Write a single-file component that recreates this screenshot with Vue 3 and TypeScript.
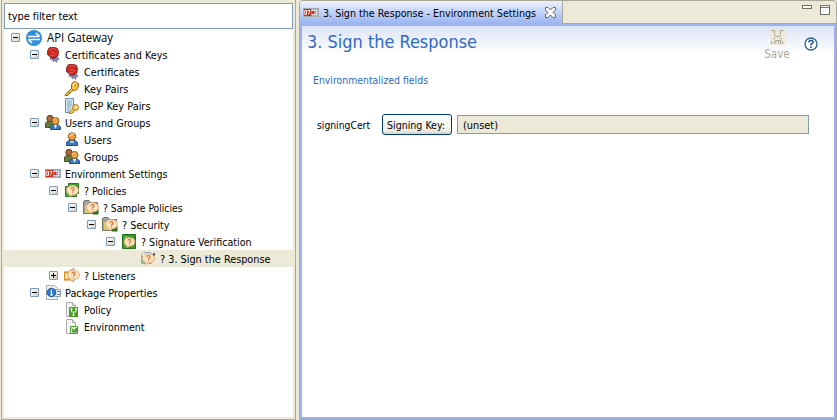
<script setup lang="ts">
interface TreeRow {
  label: string
  level: number
  icon: string
  toggle?: 'minus' | 'plus'
  selected?: boolean
  width: number
}

const rows: TreeRow[] = [
  { label: 'API Gateway', level: 0, icon: 'gateway', toggle: 'minus', width: 66 },
  { label: 'Certificates and Keys', level: 1, icon: 'seal', toggle: 'minus', width: 102.5 },
  { label: 'Certificates', level: 2, icon: 'seal', width: 55.5 },
  { label: 'Key Pairs', level: 2, icon: 'key', width: 44.5 },
  { label: 'PGP Key Pairs', level: 2, icon: 'pgp', width: 66.5 },
  { label: 'Users and Groups', level: 1, icon: 'group', toggle: 'minus', width: 85.5 },
  { label: 'Users', level: 2, icon: 'user', width: 27.5 },
  { label: 'Groups', level: 2, icon: 'group', width: 34.5 },
  { label: 'Environment Settings', level: 1, icon: 'env', toggle: 'minus', width: 102.5 },
  { label: '? Policies', level: 2, icon: 'policies', toggle: 'minus', width: 42.5 },
  { label: '? Sample Policies', level: 3, icon: 'folder', toggle: 'minus', width: 79.5 },
  { label: '? Security', level: 4, icon: 'folder', toggle: 'minus', width: 47.5 },
  { label: '? Signature Verification', level: 5, icon: 'circuit', toggle: 'minus', width: 110.5 },
  { label: '? 3. Sign the Response', level: 6, icon: 'sign', selected: true, width: 110.5 },
  { label: '? Listeners', level: 2, icon: 'listener', toggle: 'plus', width: 51.5 },
  { label: 'Package Properties', level: 1, icon: 'package', toggle: 'minus', width: 92.5 },
  { label: 'Policy', level: 2, icon: 'policyfile', width: 27.5 },
  { label: 'Environment', level: 2, icon: 'envfile', width: 60.5 },
]
</script>

<template>
  <svg class="defs" width="0" height="0">
    <defs>
      <symbol id="gateway" viewBox="0 0 16 16">
        <circle cx="8" cy="8" r="8" fill="#2d8fdd" />
        <path d="M2 6.500h11.500M10 3l3.500 3.500M14 9.500H2.500M6 13L2.500 9.500" fill="none" stroke="#fff" stroke-width="1.700" />
      </symbol>
      <symbol id="seal" viewBox="0 0 16 16">
        <path d="M6.500 9.500L5 12.500l2-.5 1.500 3 1-2 2 2.500.5-2.500 2-.5-2.500-4z" fill="#7c8abf" stroke="#56639a" stroke-width=".6" />
        <path d="M4 1l3-1 3 .5 2.500 1 1 3-.5 4-2 2-3 1-3-1.500L2.500 7.500V4z" fill="#c8251f" stroke="#8e1d1c" stroke-width=".8" />
        <path d="M4.500 3l4-1.500 3 1.500M4.500 9l4-.5 3-2" fill="none" stroke="#e96a5c" stroke-width=".9" />
        <path d="M5 5l4-1 1.500 2-4 1.500z" fill="#dc3d32" />
      </symbol>
      <symbol id="key" viewBox="0 0 16 16">
        <path d="M8.500 7L1 13.500V14.500h3v-1.500h1.500V11.500h1.500l2.500-2.500" fill="#f8ca4c" stroke="#9d6813" />
        <path d="M8.500 1.500L11 .5l3.500 2v3l-2 3.500-3 .5-2-2V4z" fill="#f7c345" stroke="#a66b14" />
        <path d="M9 4l2-2 2 .5" fill="none" stroke="#fff0a5" />
        <circle cx="12.300" cy="4" r="1.100" fill="#fff" stroke="#9b6719" stroke-width=".6" />
      </symbol>
      <symbol id="pgp" viewBox="0 0 16 16">
        <path d="M1.500.5h8v14h-8z" fill="#dbeaf5" stroke="#6c8ba7" />
        <path d="M3 3h5M3 5h5M3 7h5M3 9h4M3 11h3M3 13h2" stroke="#7ba6ca" />
        <path d="M9 10.500L5.500 14v1.500h2L10.500 12.500" fill="#f7cc52" stroke="#b4781d" />
        <circle cx="11.500" cy="9.500" r="3" fill="#f6c95d" stroke="#b4781d" />
        <circle cx="12.300" cy="8.700" r="1" fill="#fff" />
      </symbol>
      <symbol id="user" viewBox="0 0 16 16">
        <path d="M2.500 13.500V10.500L5 8.500h6l2.500 2v3z" fill="#3c7dc1" stroke="#1f4c88" />
        <path d="M6 9l2 4 2-4z" fill="#e8f4ff" />
        <path d="M7.500 10h1v3.500h-1z" fill="#193f77" />
        <circle cx="8" cy="4.500" r="3.700" fill="#ed9f3f" stroke="#945518" />
        <path d="M5.800 4l2-2 2 .5" fill="none" stroke="#ffd58b" stroke-width="1.300" />
      </symbol>
      <symbol id="group" viewBox="0 0 16 16">
        <path d="M.5 12.500V8L3 6h5v6.500z" fill="#66793f" stroke="#435429" />
        <circle cx="5" cy="3.500" r="3.200" fill="#a8693d" stroke="#704020" />
        <path d="M5.500 14.500V12L8 9.500h5l2.500 2.500v2.500z" fill="#3c7dc1" stroke="#204d87" />
        <path d="M9 10l1.500 4 1.500-4z" fill="#eef6ff" />
        <circle cx="10.500" cy="6" r="3.500" fill="#eda342" stroke="#98601e" />
        <path d="M8.500 5l2-1.500" stroke="#ffd786" />
      </symbol>
      <symbol id="env" viewBox="0 0 16 16">
        <path d="M0 3h16v9H0z" fill="#a7a9ac" />
        <path d="M1 4h7v7H1z" fill="#c4321d" />
        <path d="M8 4h7v7H8z" fill="#5c94cb" />
        <path d="M1.800 5.500h1.700v4H1.800zM4.500 5.500H7L5.500 9.500" fill="none" stroke="#fff" stroke-width=".9" />
        <path d="M8 5.500h7M8 7.500h7M8 9.500h7M9.500 4v7M11.500 4v7M13.500 4v7" stroke="#f0f6fc" stroke-width=".7" />
        <path d="M8.500 6h3v3h-3z" fill="#d03021" />
      </symbol>
      <symbol id="bubble" viewBox="0 0 13 12">
        <path d="M6.500.6C3 .6.5 2.500.5 5.300c0 2 1.200 3.500 3 4.100L3.500 11.500 7 10C10.500 10 12.500 8 12.500 5.300 12.500 2.600 10 .6 6.500.6z" fill="#fbe2bb" stroke="#dda06c" stroke-width=".8" />
        <path d="M5 4.200C5 2 8 2 8 4.200 8 5.200 6.500 5.300 6.500 6.500M6.500 7.400v1.100" fill="none" stroke="#cf6a38" stroke-width="1.100" />
      </symbol>
      <symbol id="policies" viewBox="0 0 16 16">
        <path d="M4.500.5h10v10h-10z" fill="#43a131" stroke="#207819" />
        <path d="M1.500 3.500h11v10h-11z" fill="#52ac39" stroke="#207819" />
        <use href="#bubble" x="2" y="2" width="13" height="12" />
      </symbol>
      <symbol id="folder" viewBox="0 0 16 16">
        <path d="M.5 13.500V1.500L2 .5h4L7.500 2.500h7v11z" fill="#a2a29f" stroke="#71716e" />
        <path d="M2 5h5v8H2z" fill="#ded065" />
        <path d="M10 9h5.500v5.500H10z" fill="#266c1d" />
        <use href="#bubble" x="3" y="2" width="13" height="12" />
      </symbol>
      <symbol id="circuit" viewBox="0 0 16 16">
        <path d="M1.500.5h13v14h-13z" fill="#3f982c" stroke="#1f7318" />
        <path d="M4 3v9h3M4 3h3" fill="none" stroke="#b2df8f" stroke-dasharray="1.500 1" />
        <use href="#bubble" x="2" y="3" width="13" height="11" />
      </symbol>
      <symbol id="sign" viewBox="0 0 16 16">
        <path d="M1.500 3.500l2-2h7l1 1v10h-10z" fill="#f8fbff" stroke="#91a8bd" />
        <path d="M2 6h2M2 9h2M2 11h3" stroke="#3a8b46" />
        <path d="M11 5l3-3h1v2l-4 5z" fill="#294e8a" />
        <use href="#bubble" x="2" y="2" width="13" height="12" />
      </symbol>
      <symbol id="listener" viewBox="0 0 16 16">
        <path d="M0 4h5v8H0z" fill="#f7b12e" stroke="#c87817" />
        <path d="M1.500 5.500h3v5h-3z" fill="#fff4c3" />
        <path d="M5 3l5-3v14l-5-3" fill="#e9edf2" stroke="#98a9b7" />
        <use href="#bubble" x="3" y="1" width="13" height="13" />
      </symbol>
      <symbol id="package" viewBox="0 0 16 16">
        <path d="M1.500.5h8l3 3v11h-11z" fill="#f5f5f6" stroke="#a4acb3" />
        <path d="M9.500 4.500h6v7h-6z" fill="#eef5fc" stroke="#8d9fb0" />
        <path d="M12 6.500h3M12 9.500h3" stroke="#687b8d" />
        <circle cx="6.500" cy="7.500" r="4.300" fill="#267bce" stroke="#1c5798" />
        <path d="M6.500 4.200v1.200M5.500 6.700h1v3.300M5 10h3" fill="none" stroke="#fff" stroke-width="1.200" />
      </symbol>
      <symbol id="policyfile" viewBox="0 0 16 16">
        <path d="M2.500.5h6l3 3v11h-9z" fill="#f2f2f2" stroke="#aaa" />
        <path d="M8.500.5v3h3" fill="#ddd" stroke="#aaa" />
        <path d="M5 5h9v10H5z" fill="#489a28" />
        <path d="M7.500 7v3h2v3M12 7v3h-2.500" fill="none" stroke="#d8f2c6" />
        <path d="M6.500 6h2v2h-2zM11 6h2v2h-2zM8.500 12h2v2h-2z" fill="#d8f2c6" />
      </symbol>
      <symbol id="envfile" viewBox="0 0 16 16">
        <path d="M2.500.5h6l3 3v11h-9z" fill="#f5f5f5" stroke="#aaa" />
        <path d="M8.500.5v3h3" fill="#ddd" stroke="#aaa" />
        <path d="M6.500 7.500h7v7h-7z" fill="#e3f1d9" stroke="#4a9b2e" />
        <path d="M8 9.500l2 2 2.500-2.500v4H8" fill="#66ae4d" stroke="#37801f" stroke-width=".8" />
      </symbol>
    </defs>
  </svg>
  <main class="workbench">
    <aside class="navigator">
      <input class="filter" value="type filter text" aria-label="Filter" />
      <div v-for="row in rows" :key="row.label + row.level" class="row" :class="{ selected: row.selected }" :style="{ paddingLeft: 7 + row.level * 19 + 'px' }">
        <span class="toggle-slot"><i v-if="row.toggle" class="toggle" :class="row.toggle"></i></span>
        <svg class="icon" width="16" height="16"><use :href="'#' + row.icon" /></svg>
        <svg class="label" :class="{ root: row.level === 0 }" :width="row.width + 4" height="17"><text x="0" y="12.500" :textLength="row.width" lengthAdjust="spacingAndGlyphs">{{ row.label }}</text></svg>
      </div>
    </aside>
    <section class="editor">
      <header class="tabs">
        <div class="tab">
          <svg width="16" height="16"><use href="#env" /></svg>
          <svg class="tab-title" width="220" height="17"><text y="12.500" textLength="213" lengthAdjust="spacingAndGlyphs">3. Sign the Response - Environment Settings</text></svg>
          <svg class="close" width="11" height="11" viewBox="0 0 11 11"><path d="M.5.5h2.500L5.500 3 8 .5h2.500V3L8 5.500 10.500 8v2.500H8L5.500 8 3 10.500H.500V8L3 5.500.5 3z" fill="#fff" stroke="#666" /></svg>
        </div>
        <div class="tab-rest">
          <i class="minimize"></i><i class="maximize"></i>
        </div>
      </header>
      <div class="content">
        <div class="form-head">
          <svg class="title" width="174" height="24"><text y="17" textLength="170" lengthAdjust="spacingAndGlyphs">3. Sign the Response</text></svg>
          <div class="save">
            <svg width="15" height="16" viewBox="0 0 15 16"><path d="M0 0h15v16H0z" fill="#ece9d8" /><path d="M1 1.500h4M10 1.500h4M4.500 2v4l1 1.500h4l1-1.500V2M3 9.500h2M10 9.500h2M5 11.500h6M1.500 12v3M4.500 15v-3M4.500 13.500h2M8.500 15v-3M10.500 12v3M12.500 12v3" fill="none" stroke="#aca899" /></svg>
            <span>Save</span>
          </div>
          <svg class="help" width="14" height="14" viewBox="0 0 14 14"><circle cx="7" cy="7" r="6" fill="#fff" stroke="#2b6393" stroke-width="1.300" /><path d="M5 5.500V4.500l1-1h2l1 1v1L7 7.300v1M7 9.300v1.700" fill="none" stroke="#1e568b" stroke-width="1.600" /></svg>
        </div>
        <svg class="section-title" width="124" height="17"><text y="12.500" textLength="115" lengthAdjust="spacingAndGlyphs">Environmentalized fields</text></svg>
        <div class="field">
          <svg class="field-name" width="58" height="17"><text y="12.500" textLength="53" lengthAdjust="spacingAndGlyphs">signingCert</text></svg>
          <button><svg width="60" height="17"><text y="12.500" textLength="58" lengthAdjust="spacingAndGlyphs">Signing Key:</text></svg></button>
          <div class="value"><svg width="40" height="17"><text y="12.500" textLength="35" lengthAdjust="spacingAndGlyphs">(unset)</text></svg></div>
        </div>
      </div>
    </section>
  </main>
</template>

<style>
body { margin: 0; overflow: hidden; background: #ece9d8; }
</style>
<style scoped>
.defs { position: absolute; }
.workbench { box-sizing: border-box; width: 837px; height: 420px; padding-left: 1px; display: flex; gap: 3px; background: #ece9d8; font: 11px "DejaVu Sans Condensed", "DejaVu Sans", sans-serif; font-stretch: condensed; color: #000; }
svg { display: block; flex: none; overflow: visible; }
.navigator { box-sizing: border-box; width: 295px; height: 420px; border: 1px solid #aca899; border-top: 0; padding: 3px 2px 2px; background: linear-gradient(#fff, #fff) 2px 3px / 289px 414px no-repeat, #ece9d8; }
.filter { box-sizing: border-box; display: block; width: 289px; height: 26px; border: 1px solid #7f9db9; padding: 0 3px; background: #fff; outline: none; font: inherit; font-stretch: condensed; letter-spacing: -.08px; color: #000; }
.row { box-sizing: border-box; height: 17px; display: flex; align-items: center; }
.selected { background: #ece9d8; }
.toggle-slot { width: 15px; flex: none; }
.toggle { box-sizing: border-box; display: block; width: 9px; height: 9px; border: 1px solid #7b9ab9; border-radius: 1px; background: linear-gradient(#000, #000) center / 5px 1px no-repeat, linear-gradient(135deg, #fff, #d5d0c4); }
.toggle.plus { background: linear-gradient(#000, #000) center / 5px 1px no-repeat, linear-gradient(#000, #000) center / 1px 5px no-repeat, linear-gradient(135deg, #fff, #d5d0c4); }
.icon { margin-right: 4px; }
.label.root { margin-left: 1px; font-family: "Open Sans", "Noto Sans", sans-serif; font-size: 12px; font-stretch: normal; }
.editor { box-sizing: border-box; width: 538px; height: 420px; border: 1px solid #aca899; border-radius: 4px 4px 0 0; background: #99b4f1; overflow: hidden; }
.tabs { display: flex; height: 23px; }
.tab { box-sizing: border-box; width: 262px; height: 23px; padding: 0 0 0 3px; display: flex; align-items: center; background: linear-gradient(#eef2fd, #c5d5f9 45%, #99b4f1); }
.tab-title { margin-left: 4px; }
.close { margin-left: 2px; margin-bottom: 1px; }
.tab-rest { box-sizing: border-box; flex: 1; border-left: 1px solid #aca899; border-bottom: 1px solid #aca899; padding: 4px 6px; display: flex; justify-content: flex-end; gap: 8px; background: #ece9d8; }
.minimize, .maximize { box-sizing: border-box; width: 10px; height: 4px; border: 1px solid #716f64; background: #fff; }
.maximize { height: 10px; background: linear-gradient(#716f64, #716f64) 0 1px / 100% 1px no-repeat, #fff; }
.content { box-sizing: border-box; width: 532px; height: 391px; margin: 2px; background: #fff; }
.form-head { height: 45px; display: flex; padding-left: 5px; background: linear-gradient(#dbe3f4, #fff 27px); }
.title { margin-top: 5px; font-size: 17px; fill: #316ac5; }
.save { width: 28px; margin-left: 282px; padding-top: 3px; display: flex; flex-direction: column; align-items: center; color: #aca899; }
.save span { line-height: 14px; margin-top: 2px; font-size: 11.500px; }
.help { margin: 11px 0 0 13px; }
.section-title { margin-left: 10.500px; fill: #316ac5; }
.field { display: flex; align-items: center; height: 22px; margin: 25px 0 0 14.500px; }
button { box-sizing: border-box; width: 70px; height: 21px; margin: 0 0 0 7.500px; padding: 0 4px; border: 1px solid #003c74; border-radius: 3px; background: linear-gradient(#fff, #f0f0ea 80%, #d6d0c5); font: inherit; font-stretch: condensed; color: #000; }
.value { box-sizing: border-box; width: 352px; height: 19px; margin-left: 5px; padding-left: 5px; border: 1px solid #7f9db9; background: #ece9d8; }
</style>
